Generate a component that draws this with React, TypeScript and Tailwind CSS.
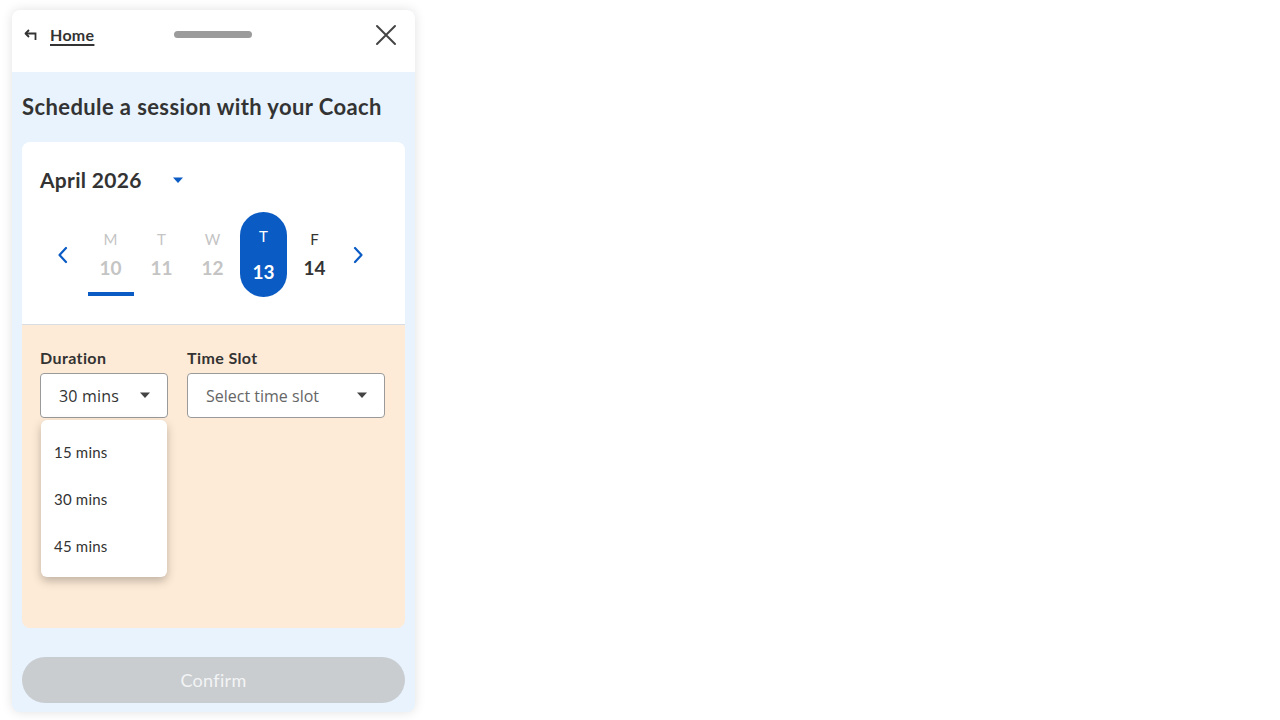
import React from "react";

const Caret = ({ className = "" }: { className?: string }) => (
  <svg width="12" height="7" viewBox="0 0 12 7" className={className}>
    <path d="M1 0.5h10L6 6z" fill="currentColor" />
  </svg>
);

const Chevron = ({ dir }: { dir: "left" | "right" }) => (
  <svg width="14" height="20" viewBox="0 0 14 20" className="text-[#0a5bc4]">
    {dir === "left" ? (
      <path d="M10 3L3.5 10L10 17" fill="none" stroke="currentColor" strokeWidth="2.2" strokeLinecap="round" strokeLinejoin="round" />
    ) : (
      <path d="M4 3L10.5 10L4 17" fill="none" stroke="currentColor" strokeWidth="2.2" strokeLinecap="round" strokeLinejoin="round" />
    )}
  </svg>
);

export default function App() {
  const days = [
    { l: "M", n: "10", state: "past", today: true },
    { l: "T", n: "11", state: "past" },
    { l: "W", n: "12", state: "past" },
    { l: "T", n: "13", state: "sel" },
    { l: "F", n: "14", state: "future" },
  ];
  return (
    <div className="w-[1280px] h-[720px] bg-white relative" style={{ fontFamily: "Lato, 'Noto Sans', sans-serif" }}>
      <div className="absolute left-[12px] top-[10px] w-[403px] h-[702px] rounded-[8px] overflow-hidden bg-[#e8f3fe] shadow-[0_0_12px_rgba(0,0,0,0.12)] flex flex-col">
        {/* header */}
        <div className="h-[62px] bg-white flex items-start pt-[14px] px-[12px] relative shrink-0">
          <div className="flex items-center gap-[11px]">
            <svg width="15" height="12" viewBox="0 0 15 12" className="text-[#333]">
              <path d="M5 1L1.5 4.5L5 8" fill="none" stroke="currentColor" strokeWidth="1.8" strokeLinejoin="round" />
              <path d="M2 4.5H11.5V11" fill="none" stroke="currentColor" strokeWidth="1.8" />
            </svg>
            <span className="text-[16px] font-bold text-[#333] underline underline-offset-[3px] decoration-[1.5px] tracking-[0.3px] leading-[22px]">Home</span>
          </div>
          <div className="absolute left-[162px] top-[21px] w-[78px] h-[7px] rounded-full bg-[#9b9b9b]" />
          <svg width="22" height="22" viewBox="0 0 22 22" className="absolute left-[363px] top-[14px] text-[#444]">
            <path d="M2 2L20 20M20 2L2 20" stroke="currentColor" strokeWidth="2" strokeLinecap="round" />
          </svg>
        </div>
        {/* body */}
        <div className="flex-1 px-[10px] flex flex-col">
          <h1 className="mt-[22px] text-[22px] font-bold text-[#333] leading-[26px] tracking-[0.4px] whitespace-nowrap">Schedule a session with your Coach</h1>
          <div className="mt-[22px] rounded-[8px] overflow-hidden flex flex-col h-[486px]">
            <div className="bg-white h-[183px] border-b border-[#d8dde3] px-[18px] pt-[25px] shrink-0">
              <div className="flex items-center">
                <span className="w-[132px] text-[21px] font-bold text-[#333] leading-[26px] tracking-[0.3px]">April 2026</span>
                <Caret className="text-[#0a5bc4]" />
              </div>
              <div className="flex items-center mt-[19px]">
                <div className="w-[14px] ml-[16px] flex justify-center"><Chevron dir="left" /></div>
                <div className="flex ml-[15px]">
                  {days.map((d, i) => (
                    <div key={i} className="w-[51px] flex justify-center">
                      {d.state === "sel" ? (
                        <div className="w-[47px] h-[85px] rounded-full bg-[#0a5bc4] text-white flex flex-col items-center pt-[15px]">
                          <span className="text-[15px] leading-[18px]">{d.l}</span>
                          <span className="text-[19px] font-bold leading-[22px] mt-[16px]">{d.n}</span>
                        </div>
                      ) : (
                        <div className="h-[85px] w-[46px] flex flex-col items-center pt-[18px] relative">
                          <span className={`text-[15px] leading-[18px] ${d.state === "past" ? "text-[#c4c4c4]" : "text-[#333]"}`}>{d.l}</span>
                          <span className={`text-[19px] font-bold leading-[22px] mt-[9px] ${d.state === "past" ? "text-[#c4c4c4]" : "text-[#333]"}`}>{d.n}</span>
                          {d.today && <div className="absolute left-0 top-[80px] w-[46px] h-[4px] bg-[#0a5bc4]" />}
                        </div>
                      )}
                    </div>
                  ))}
                </div>
                <div className="w-[14px] ml-[11px] flex justify-center"><Chevron dir="right" /></div>
              </div>
            </div>
            <div className="flex-1 bg-[#feebd7] px-[18px] pt-[24px]">
              <div className="flex gap-[19px]">
                <div className="w-[128px] relative">
                  <div className="text-[16px] font-bold text-[#333] leading-[18px] tracking-[0.4px]">Duration</div>
                  <div className="mt-[6px] h-[45px] bg-white border border-[#9a9a9a] rounded-[4px] flex items-center pl-[18px] pr-[16px] justify-between">
                    <span className="text-[16px] text-[#333] tracking-[0.2px]" style={{ fontFamily: "'Open Sans', sans-serif" }}>30 mins</span>
                    <Caret className="text-[#444]" />
                  </div>
                  <div className="absolute left-[1px] top-[71px] w-[126px] h-[157px] bg-white rounded-[6px] shadow-[0_4px_10px_rgba(0,0,0,0.25)] flex flex-col pt-[22px] pl-[13px] gap-[26px]">
                    <span className="text-[15px] text-[#333] leading-[21px] tracking-[0.2px]">15 mins</span>
                    <span className="text-[15px] text-[#333] leading-[21px] tracking-[0.2px]">30 mins</span>
                    <span className="text-[15px] text-[#333] leading-[21px] tracking-[0.2px]">45 mins</span>
                  </div>
                </div>
                <div className="w-[198px]">
                  <div className="text-[16px] font-bold text-[#333] leading-[18px] tracking-[0.4px]">Time Slot</div>
                  <div className="mt-[6px] h-[45px] bg-white border border-[#9a9a9a] rounded-[4px] flex items-center pl-[18px] pr-[16px] justify-between">
                    <span className="text-[16px] text-[#666]" style={{ fontFamily: "'Open Sans', sans-serif" }}>Select time slot</span>
                    <Caret className="text-[#444]" />
                  </div>
                </div>
              </div>
            </div>
          </div>
          <button className="mt-[29px] h-[46px] w-full rounded-full bg-[#c9cdd0] text-[#f3f4f5] text-[18px] tracking-[0.3px]">Confirm</button>
        </div>
      </div>
    </div>
  );
}
